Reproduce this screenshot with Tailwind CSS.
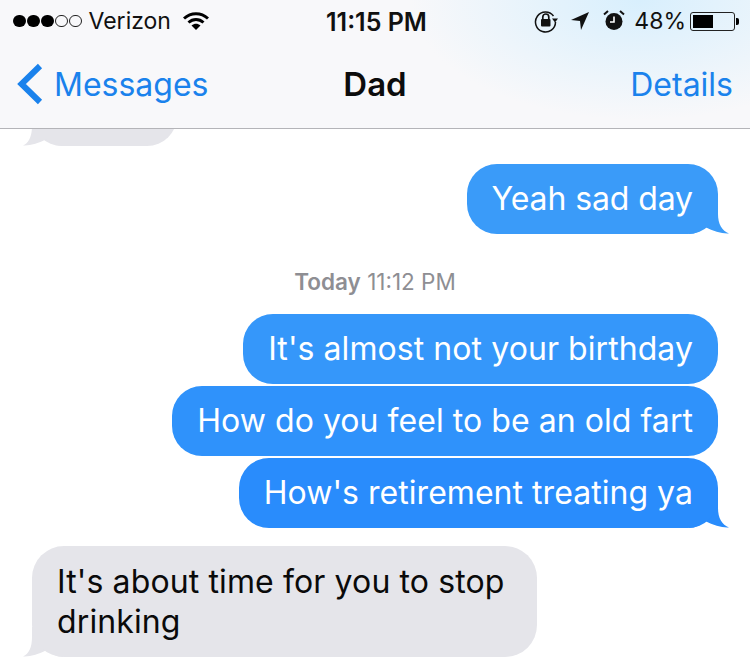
<!DOCTYPE html>
<html><head><meta charset="utf-8">
<script src="https://cdn.jsdelivr.net/npm/@tailwindcss/browser@4"></script>
</head>
<body class="m-0 bg-white">
<div class="w-[750px] h-[664px] overflow-hidden bg-white font-['Inter','Liberation_Sans',sans-serif]">
  <header class="h-[129px] border-b border-[#b4b4b8] bg-[radial-gradient(230px_120px_at_640px_0px,#d8effd,#f8f8fa)] flex flex-col">
    <div class="h-[42px] flex items-center justify-between relative text-[#111] text-[23px] pl-[13px] pr-[15px]">
      <div class="flex items-center">
        <span class="flex gap-[1.500px] items-center">
          <i class="block w-[12.500px] h-[12.500px] rounded-full bg-black"></i><i class="block w-[12.500px] h-[12.500px] rounded-full bg-black"></i><i class="block w-[12.500px] h-[12.500px] rounded-full bg-black"></i><i class="block w-[12.500px] h-[12.500px] rounded-full border border-[#222]"></i><i class="block w-[12.500px] h-[12.500px] rounded-full border border-[#222]"></i>
        </span>
        <span class="ml-[7px]">Verizon</span>
        <svg class="ml-[12px]" width="26" height="20" viewBox="0 0 26 20"><path d="M1 7.500C8 1 18 1 25 7.500" fill="none" stroke="#000" stroke-width="3"/><path d="M5.500 11.500C10 7.500 16 7.500 20.500 11.500" fill="none" stroke="#000" stroke-width="3"/><path d="M8.500 14.500C11.500 12 14.500 12 17.500 14.500L13 19Z" fill="#000"/></svg>
      </div>
      <span class="absolute left-[326px] top-[4px] font-semibold text-[25px]">11:15 PM</span>
      <div class="flex items-center">
        <svg width="24" height="24" viewBox="0 0 24 24"><path d="M19.500 7A10 10 0 1 0 21.500 13" fill="none" stroke="#111" stroke-width="1.500"/><path d="M18 9.500l6 0-3 4Z" fill="#111"/><rect x="7" y="10" width="9.500" height="7.500" rx="1" fill="#111"/><path d="M8.800 11V8a3 3 0 0 1 6 0V11" fill="none" stroke="#111" stroke-width="1.700"/></svg>
        <svg class="ml-[12px]" width="20" height="22" viewBox="0 0 20 22"><path d="M19 2L11 20L10 11L1 10Z" fill="#111"/></svg>
        <svg class="ml-[13px]" width="22" height="22" viewBox="0 0 22 22"><circle cx="11" cy="11.500" r="8.500" fill="#111"/><path d="M11 6.500v5.500H7" fill="none" stroke="#fff" stroke-width="1.600"/><path d="M1 4.500L5 1M21 4.500L17 1" stroke="#111" stroke-width="2"/></svg>
        <span class="ml-[9px]">48%</span>
        <span class="ml-[4px] relative block w-[45px] h-[19px] rounded-[3px] border border-[#222] p-[2px]"><i class="block h-full w-[20px] bg-black"></i><i class="absolute right-[-5px] top-[5px] w-[3px] h-[7px] bg-black rounded-r-[2px]"></i></span>
      </div>
    </div>
    <nav class="h-[86px] flex items-center justify-between relative pl-[17px] pr-[17px] text-[#1a82ec] text-[32px]">
      <div class="flex items-center gap-[11px]">
        <svg class="-mt-[2px]" width="26" height="42" viewBox="0 0 26 42"><path d="M23 3L4.500 21L23 39" fill="none" stroke="#1a82ec" stroke-width="6"/></svg>
        <span>Messages</span>
      </div>
      <span class="absolute left-0 right-0 text-center text-[#0c0c0c] text-[33px] font-semibold">Dad</span>
      <span>Details</span>
    </nav>
  </header>

  <main class="relative">
    <div class="h-[17px] pl-[32px] relative overflow-hidden">
      <div class="w-[145px] h-[70px] -mt-[53px] rounded-[30px] bg-[#e5e5ea]"></div>
      <svg class="absolute left-[23px] bottom-0" width="40" height="30" viewBox="0 0 40 30"><path d="M9 0V10C9 20 6 27 0 29.500C7 30 15 27.500 24 23C28 27 34 30 40 30V0Z" fill="#e5e5ea"/></svg>
    </div>
    <section class="flex flex-col items-end pr-[32px] pt-[18px] text-[32px]">
      <div class="relative">
        <svg class="absolute right-[-11px] bottom-0" width="40" height="30" viewBox="0 0 40 30"><path d="M29 0V10C29 20 33 27 40 29.500C33 30 25 27.500 16 23C12 27 6 30 0 30V0Z" fill="#3a9bf9"/></svg>
        <p class="relative h-[70px] leading-[70px] pl-[25px] pr-[25px] rounded-[30px] bg-[#3a9bf9] text-white tracking-[-0.1px]">Yeah sad day</p>
      </div>
    </section>
    <p class="mt-[34px] h-[28px] leading-[28px] text-center text-[22.500px] text-[#8e8e93]"><b class="font-semibold">Today</b> 11:12 PM</p>
    <section class="flex flex-col items-end gap-[2px] pr-[32px] mt-[18px] text-[32px]">
      <p class="h-[70px] leading-[70px] pl-[25px] pr-[25px] rounded-[30px] bg-[#3597fa] text-white tracking-[0.07px]">It's almost not your birthday</p>
      <p class="h-[70px] leading-[70px] pl-[25px] pr-[25px] rounded-[30px] bg-[#2f92fb] text-white tracking-[0.05px]">How do you feel to be an old fart</p>
      <div class="relative">
        <svg class="absolute right-[-11px] bottom-0" width="40" height="30" viewBox="0 0 40 30"><path d="M29 0V10C29 20 33 27 40 29.500C33 30 25 27.500 16 23C12 27 6 30 0 30V0Z" fill="#298cfc"/></svg>
        <p class="relative h-[70px] leading-[70px] pl-[25px] pr-[25px] rounded-[30px] bg-[#298cfc] text-white tracking-[0.04px]">How's retirement treating ya</p>
      </div>
    </section>
    <section class="pl-[32px] mt-[18px]">
      <div class="relative w-[505px]">
        <svg class="absolute left-[-9px] bottom-0" width="40" height="30" viewBox="0 0 40 30"><path d="M9 0V10C9 20 6 27 0 29.500C7 30 15 27.500 24 23C28 27 34 30 40 30V0Z" fill="#e5e5ea"/></svg>
        <p class="relative h-[111px] pt-[16px] pl-[25px] pr-[20px] rounded-[32px] bg-[#e5e5ea] text-[#0a0a0a] text-[32px] tracking-[0.12px] leading-[40px]">It's about time for you to stop drinking</p>
      </div>
    </section>
  </main>
</div>
</body></html>
